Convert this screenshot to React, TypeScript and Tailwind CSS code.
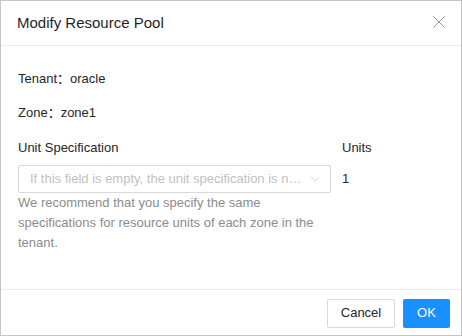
import { ChevronDown, X } from "lucide-react";

export default function App() {
  return (
    <div
      className="w-[462px] h-[336px] bg-white border border-[#c6c6c6] flex flex-col text-[#262626]"
      style={{ fontFamily: '"Liberation Sans", "Noto Sans CJK SC", sans-serif' }}
    >
      {/* Header */}
      <div className="h-[45px] shrink-0 border-b border-[#ebebeb] flex items-center justify-between pl-[16px] pr-[11px]">
        <span className="text-[15px] font-medium text-[#1f1f1f]">Modify Resource Pool</span>
        <X size={22} strokeWidth={1} className="text-[#8c8c8c] -mt-[3px]" />
      </div>

      {/* Body */}
      <div className="flex-1 pl-[17px] pr-[12px] pt-[23px] text-[13px] leading-[20px]">
        <div>Tenant：oracle</div>
        <div className="mt-[14px]">Zone：zone1</div>

        <div className="mt-[15px] flex gap-[11px]">
          <div className="w-[313px]">
            <div>Unit Specification</div>
            <div className="mt-[7px] h-[28px] border border-[#d9d9d9] rounded-[2px] flex items-center justify-between pl-[11px] pr-[8px]">
              <span className="whitespace-nowrap text-[#bfbfbf]">
                If this field is empty, the unit specification is n…
              </span>
              <ChevronDown size={14} strokeWidth={1.2} className="text-[#bfbfbf] shrink-0" />
            </div>
            <p className="text-[#8c8c8c]">
              We recommend that you specify the same specifications for resource units of each zone in the tenant.
            </p>
          </div>
          <div>
            <div>Units</div>
            <div className="mt-[7px] h-[28px] flex items-center">1</div>
          </div>
        </div>
      </div>

      {/* Footer */}
      <div className="h-[46px] shrink-0 border-t border-[#ebebeb] flex items-center justify-end gap-[8px] pr-[11px] pt-[1px]">
        <button className="h-[29px] w-[68px] border border-[#d9d9d9] rounded-[2px] text-[13px] text-[#262626] bg-white">
          Cancel
        </button>
        <button className="h-[29px] w-[47px] rounded-[2px] text-[13px] text-white bg-[#1890ff]">OK</button>
      </div>
    </div>
  );
}
